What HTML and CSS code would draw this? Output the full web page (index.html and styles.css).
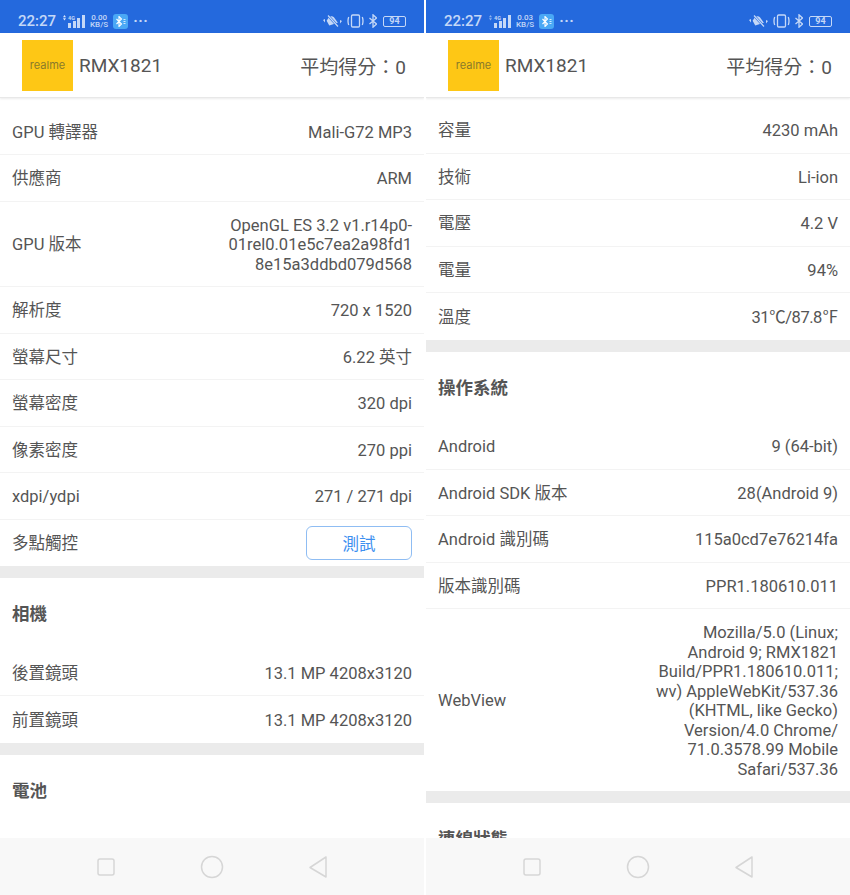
FILE: index.html
```html
<!DOCTYPE html>
<html lang="zh-Hant">
<head>
    <meta charset="UTF-8">
    <meta name="viewport" content="width=device-width, initial-scale=1.0">
    <title>RMX1821</title>
    <link rel="stylesheet" href="styles.css">
</head>
<body>
    <div class="screens">
        <div class="phone">
            <div class="status-bar">
                <span class="clock">22:27</span>
                <svg class="signal" width="22" height="13" viewBox="0 0 22 13">
                    <path d="M0 2.300L1.500 0 3 2.300zM0 3.200L1.500 5.500 3 3.200z" fill="#dbe7fa"/>
                    <text x="5" y="4.500" class="net">4G</text>
                    <rect x="5" y="8" width="3" height="5" class="bar"/>
                    <rect x="10" y="6" width="3" height="7" class="bar"/>
                    <rect x="14" y="3" width="3" height="10" class="bar"/>
                    <rect x="19" y="0" width="3" height="13" class="bar"/>
                </svg>
                <span class="speed">0.00<br>KB/S</span>
                <span class="bt-badge">
                    <svg width="12" height="11" viewBox="0 0 12 11"><path d="M1.500 3l5 5L4 10.500v-10L6.500 3l-5 5" fill="none" stroke="#fff" stroke-width="1.100"/><path d="M8.500 3.500h2M8.500 5.500h2M8.500 7.500h2" stroke="#cfeaff"/></svg>
                </span>
                <span class="dots">···</span>
                <div class="status-right">
                    <svg width="19" height="14" viewBox="0 0 19 14"><path d="M6 3.500a3.500 3.500 0 0 1 6 .5l2 6.500H5L4 5z" class="glyph-fill" transform="rotate(-18 9 7)"/><path d="M5 1.500l10 11" stroke="#2469dd" stroke-width="2.500"/><path d="M5 1.500l10 11" stroke="#c5d8f7" stroke-width="1.200"/><path d="M0 6l2-1v3.500zM19 7l-2-1v3.500z" class="glyph-fill"/></svg>
                    <svg width="17" height="14" viewBox="0 0 17 14"><rect x="4.500" y="1" width="8" height="12" rx="1.200" class="glyph-line"/><path d="M1.700 3q-1.400 4 0 8M15.300 3q1.400 4 0 8" class="glyph-line"/></svg>
                    <svg width="8" height="14" viewBox="0 0 8 14"><path d="M.5 4l7 6-3.500 3.200V.8L7.500 4l-7 6" class="glyph-line"/></svg>
                    <span class="battery">94</span>
                </div>
            </div>
            <header class="app-header">
                <div class="brand"><span class="logo">realme</span><span class="model">RMX1821</span></div>
                <div class="score">平均得分：0</div>
            </header>
            <main class="content">
                <div class="row"><span>GPU 轉譯器</span><span>Mali-G72 MP3</span></div>
                <div class="row"><span>供應商</span><span>ARM</span></div>
                <div class="row"><span>GPU 版本</span><span class="long">OpenGL ES 3.2 v1.r14p0-01rel0.01e5c7ea2a98fd18e15a3ddbd079d568</span></div>
                <div class="row"><span>解析度</span><span>720 x 1520</span></div>
                <div class="row"><span>螢幕尺寸</span><span>6.22 英寸</span></div>
                <div class="row"><span>螢幕密度</span><span>320 dpi</span></div>
                <div class="row"><span>像素密度</span><span>270 ppi</span></div>
                <div class="row"><span>xdpi/ydpi</span><span>271 / 271 dpi</span></div>
                <div class="row last"><span>多點觸控</span><button class="test-btn">測試</button></div>
                <div class="gap"></div>
                <h2 class="section-title">相機</h2>
                <div class="row"><span>後置鏡頭</span><span>13.1 MP 4208x3120</span></div>
                <div class="row last"><span>前置鏡頭</span><span>13.1 MP 4208x3120</span></div>
                <div class="gap"></div>
                <h2 class="section-title">電池</h2>
            </main>
            <nav class="nav-bar">
                <svg width="20" height="20" viewBox="0 0 20 20"><rect x="2" y="2" width="16" height="16" rx="2" class="nav-icon"/></svg>
                <svg width="24" height="24" viewBox="0 0 24 24"><circle cx="12" cy="12" r="10.500" class="nav-icon"/></svg>
                <svg width="20" height="24" viewBox="0 0 20 24"><path d="M18 2v20L2 12.500z" stroke-linejoin="round" class="nav-icon"/></svg>
            </nav>
        </div>
        <div class="phone">
            <div class="status-bar">
                <span class="clock">22:27</span>
                <svg class="signal" width="22" height="13" viewBox="0 0 22 13">
                    <path d="M0 2.300L1.500 0 3 2.300zM0 3.200L1.500 5.500 3 3.200z" fill="#8fb3ee"/>
                    <text x="5" y="4.500" class="net">4G</text>
                    <rect x="5" y="8" width="3" height="5" class="bar"/>
                    <rect x="10" y="6" width="3" height="7" class="bar"/>
                    <rect x="14" y="3" width="3" height="10" class="bar"/>
                    <rect x="19" y="0" width="3" height="13" class="bar"/>
                </svg>
                <span class="speed">0.03<br>KB/S</span>
                <span class="bt-badge">
                    <svg width="12" height="11" viewBox="0 0 12 11"><path d="M1.500 3l5 5L4 10.500v-10L6.500 3l-5 5" fill="none" stroke="#fff" stroke-width="1.100"/><path d="M8.500 3.500h2M8.500 5.500h2M8.500 7.500h2" stroke="#cfeaff"/></svg>
                </span>
                <span class="dots">···</span>
                <div class="status-right">
                    <svg width="19" height="14" viewBox="0 0 19 14"><path d="M6 3.500a3.500 3.500 0 0 1 6 .5l2 6.500H5L4 5z" class="glyph-fill" transform="rotate(-18 9 7)"/><path d="M5 1.500l10 11" stroke="#2469dd" stroke-width="2.500"/><path d="M5 1.500l10 11" stroke="#c5d8f7" stroke-width="1.200"/><path d="M0 6l2-1v3.500zM19 7l-2-1v3.500z" class="glyph-fill"/></svg>
                    <svg width="17" height="14" viewBox="0 0 17 14"><rect x="4.500" y="1" width="8" height="12" rx="1.200" class="glyph-line"/><path d="M1.700 3q-1.400 4 0 8M15.300 3q1.400 4 0 8" class="glyph-line"/></svg>
                    <svg width="8" height="14" viewBox="0 0 8 14"><path d="M.5 4l7 6-3.500 3.200V.8L7.500 4l-7 6" class="glyph-line"/></svg>
                    <span class="battery">94</span>
                </div>
            </div>
            <header class="app-header">
                <div class="brand"><span class="logo">realme</span><span class="model">RMX1821</span></div>
                <div class="score">平均得分：0</div>
            </header>
            <main class="content scrolled">
                <div class="row"><span>容量</span><span>4230 mAh</span></div>
                <div class="row"><span>技術</span><span>Li-ion</span></div>
                <div class="row"><span>電壓</span><span>4.2 V</span></div>
                <div class="row"><span>電量</span><span>94%</span></div>
                <div class="row last"><span>溫度</span><span class="temp">31℃/87.8℉</span></div>
                <div class="gap"></div>
                <h2 class="section-title">操作系統</h2>
                <div class="row"><span>Android</span><span>9 (64-bit)</span></div>
                <div class="row"><span>Android SDK 版本</span><span>28(Android 9)</span></div>
                <div class="row"><span>Android 識別碼</span><span>115a0cd7e76214fa</span></div>
                <div class="row"><span>版本識別碼</span><span>PPR1.180610.011</span></div>
                <div class="row last"><span>WebView</span><span class="long">Mozilla/5.0 (Linux; Android 9; RMX1821 Build/PPR1.180610.011; wv) AppleWebKit/537.36 (KHTML, like Gecko) Version/4.0 Chrome/<wbr>71.0.3578.99 Mobile Safari/537.36</span></div>
                <div class="gap"></div>
                <h2 class="section-title">連線狀態</h2>
            </main>
            <nav class="nav-bar">
                <svg width="20" height="20" viewBox="0 0 20 20"><rect x="2" y="2" width="16" height="16" rx="2" class="nav-icon"/></svg>
                <svg width="24" height="24" viewBox="0 0 24 24"><circle cx="12" cy="12" r="10.500" class="nav-icon"/></svg>
                <svg width="20" height="24" viewBox="0 0 20 24"><path d="M18 2v20L2 12.500z" stroke-linejoin="round" class="nav-icon"/></svg>
            </nav>
        </div>
    </div>
</body>
</html>
```

FILE: styles.css
```css
* {
    margin: 0;
    padding: 0;
    box-sizing: border-box;
}

body {
    background: #fff;
    font-family: Roboto, "Noto Sans CJK TC", sans-serif;
    color: #555;
    overflow: hidden;
}

.screens {
    display: flex;
    justify-content: space-between;
    width: 850px;
    height: 895px;
}

.phone {
    width: 424px;
    height: 895px;
    display: flex;
    flex-direction: column;
    overflow: hidden;
}

.status-bar {
    height: 33px;
    flex: none;
    display: flex;
    align-items: center;
    padding: 9px 18px 0 18px;
    background: #2469dd;
    color: #c5d8f7;
}

.clock {
    font-size: 15px;
    font-weight: 500;
    margin-right: 7px;
}

.signal {
    flex: none;
    margin-right: 5px;
}

.bar {
    fill: #c5d8f7;
}

.net {
    font-size: 5.500px;
    font-weight: 700;
    fill: #c5d8f7;
}

.glyph-fill {
    fill: #c5d8f7;
}

.glyph-line {
    fill: none;
    stroke: #c5d8f7;
    stroke-width: 1.300;
}

.speed {
    font-size: 8px;
    font-weight: 500;
    line-height: 7.500px;
    text-align: center;
    margin-right: 5px;
}

.bt-badge {
    width: 15px;
    height: 15px;
    border-radius: 3px;
    background: #4aa8f5;
    display: flex;
    align-items: center;
    justify-content: center;
    margin-right: 5px;
}

.dots {
    font-size: 15px;
    font-weight: 700;
    letter-spacing: 0.500px;
}

.status-right {
    margin-left: auto;
    display: flex;
    align-items: center;
    gap: 5px;
}

.battery {
    width: 23px;
    height: 11px;
    border: 1px solid #c5d8f7;
    border-radius: 2px;
    font-size: 9px;
    font-weight: 700;
    line-height: 9px;
    text-align: center;
    margin-left: 1px;
}

.app-header {
    height: 65px;
    flex: none;
    display: flex;
    align-items: center;
    justify-content: space-between;
    padding: 0 18px 0 22px;
    background: #fff;
    border-bottom: 1px solid #e8e8e8;
    box-shadow: 0 1px 2px rgba(0, 0, 0, 0.08);
    position: relative;
}

.brand {
    display: flex;
    align-items: center;
    gap: 6px;
}

.logo {
    width: 51px;
    height: 51px;
    background: #fec715;
    color: #8a7a2a;
    font-family: Inter, sans-serif;
    font-size: 11px;
    line-height: 51px;
    text-align: center;
}

.model,
.score {
    font-size: 19px;
}

.content {
    flex: 1;
    min-height: 0;
    overflow: hidden;
    padding-top: 10.500px;
}

.content.scrolled {
    padding-top: 9px;
}

.row {
    min-height: 46.500px;
    display: flex;
    align-items: center;
    justify-content: space-between;
    padding: 2px 12px 0;
    border-bottom: 1px solid #f3f3f3;
    font-size: 16.500px;
    line-height: 19.500px;
}

.row.last {
    border-bottom: 0;
}

.long {
    width: 186px;
    padding: 12px 0;
    text-align: right;
    overflow-wrap: anywhere;
}

.temp {
    letter-spacing: -0.450px;
}

.test-btn {
    width: 106px;
    height: 34px;
    margin-top: -2px;
    border: 1px solid #8fbdf3;
    border-radius: 6px;
    background: #fff;
    color: #3d8ff0;
    font-family: inherit;
    font-size: 16.500px;
}

.gap {
    height: 12px;
    background: #ebebeb;
}

.section-title {
    height: 71.500px;
    padding: 0 12px;
    font-size: 17.500px;
    font-weight: 700;
    line-height: 73px;
}

.nav-bar {
    height: 57px;
    flex: none;
    display: flex;
    align-items: center;
    justify-content: center;
    gap: 84px;
    background: #f8f8f8;
}

.nav-icon {
    fill: none;
    stroke: #d6d6d6;
    stroke-width: 1.500;
}
```
